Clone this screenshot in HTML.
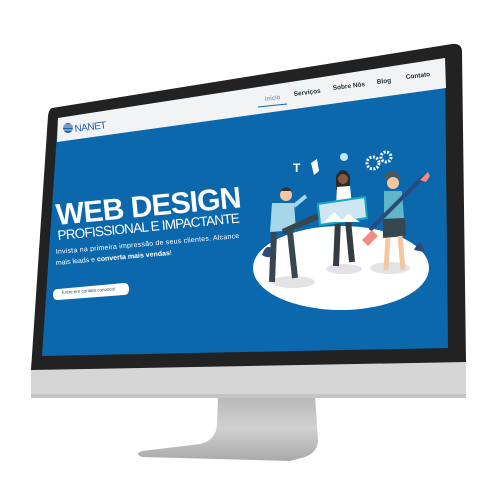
<!DOCTYPE html>
<html><head><meta charset="utf-8"><style>
html,body{margin:0;padding:0;background:#fff;width:500px;height:500px;overflow:hidden}
svg{display:block}
text{font-family:"Liberation Sans",sans-serif}
</style></head><body>
<svg width="500" height="500" viewBox="0 0 500 500">
<defs>
<linearGradient id="st" x1="0" y1="0" x2="0" y2="1"><stop offset="0" stop-color="#b8b8b8"/><stop offset="0.5" stop-color="#d0d0d0"/><stop offset="1" stop-color="#a9a9a9"/></linearGradient>
</defs>
<!-- stand -->
<path d="M218,396 L315,396 L318,440 Q318,452 305,457 L290,461 L142,457 Q134,454 142,451 L200,444 Q216,440 217,425 Z" fill="url(#st)"/>
<!-- chin -->
<path d="M31,362 L466,352 L466,392 Q466,398 460,398 L37,398 Q31,398 31,392 Z" fill="#d6d6d6"/>
<path d="M31,394 L466,394 L466,398 L31,398 Z" fill="#c4c4c4"/>
<!-- bezel -->
<path d="M52,108 L452,44 Q462,43 462,52 L466,362 L31,370 L48,116 Q49,109 52,108 Z" fill="#222"/>
<!-- screen blue -->
<path d="M58,118 L445,58 L448,348 L42,356 Z" fill="#0b68ad"/>
<!-- nav -->
<path d="M58,118 L445,58 L446,88 L57,142 Z" fill="#f2f3f5"/>
<line x1="258" y1="107" x2="287" y2="104" stroke="#0b68ad" stroke-width="1"/>
<g font-size="6.5" font-weight="bold" fill="#233">
<text x="265" y="101" transform="rotate(-7 265 101)" fill="#5a8fc0" font-weight="normal">Início</text>
<text x="294" y="96" transform="rotate(-7 294 96)">Serviços</text>
<text x="333" y="90" transform="rotate(-7 333 90)">Sobre Nós</text>
<text x="377" y="84" transform="rotate(-7 377 84)">Blog</text>
<text x="406" y="79" transform="rotate(-7 406 79)">Contato</text>
</g>
<!-- logo -->
<circle cx="68" cy="128" r="5" fill="#1f5ea8"/>
<path d="M63,127 h10 M63.5,130 h9 M64,125 h8" stroke="#fff" stroke-width="0.8"/>
<text x="75" y="132" font-size="10" fill="#1f5ea8" transform="rotate(-7 75 132)" letter-spacing="-0.5">NANET</text>
<!-- hero text -->
<text x="57" y="225" font-size="30" font-weight="bold" fill="#fff" transform="rotate(-5.5 57 225)" textLength="186">WEB DESIGN</text>
<text x="58" y="240" font-size="13.5" fill="#fff" transform="rotate(-5.5 58 240)" textLength="183">PROFISSIONAL E IMPACTANTE</text>
<text x="56" y="254" font-size="7" fill="#fff" transform="rotate(-5 56 254)" textLength="184">Invista na primeira impressão de seus clientes. Alcance</text>
<text x="56" y="265" font-size="7" fill="#fff" transform="rotate(-5 56 265)">mais leads e <tspan font-weight="bold">converta mais vendas</tspan>!</text>
<path d="M58,289 L124,283 Q129,283 129,289 Q129,295 124,295 L58,300 Q53,300 53,295 Q53,289 58,289 Z" fill="#fff"/>
<text x="62" y="294" font-size="4.5" fill="#345" transform="rotate(-4 62 294)">Entre em contato conosco!</text>
<!-- illustration -->
<ellipse cx="341" cy="268" rx="88" ry="42" fill="#fff"/>
<ellipse cx="293" cy="282" rx="22" ry="6" fill="#e3e3e6"/>
<ellipse cx="344" cy="269" rx="18" ry="5" fill="#e3e3e6"/>
<ellipse cx="390" cy="268" rx="20" ry="6" fill="#e3e3e6"/>
<path d="M262,255 q5,-14 12,-4 q-2,10 -12,4z" fill="#2e4a7a"/>
<path d="M414,250 q8,-16 10,2z" fill="#2e4a7a"/>
<!-- person 1 -->
<circle cx="286" cy="195" r="6" fill="#f4c7a1"/>
<path d="M280,191 q6,-8 12,0z" fill="#333"/>
<path d="M272,203 L294,203 L296,230 L270,232 Z" fill="#a7d6ea"/>
<path d="M294,206 L306,196" stroke="#a7d6ea" stroke-width="4"/>
<path d="M274,232 L272,282 M290,232 L295,278" stroke="#37474f" stroke-width="6"/>
<path d="M283,232 L318,216" stroke="#37474f" stroke-width="6"/>
<!-- person 2 -->
<circle cx="343" cy="178" r="6" fill="#8a5a3c"/>
<path d="M336,176 q7,-12 14,0 l0,14 l-14,0z" fill="#2b2b2b"/>
<circle cx="343" cy="179" r="5" fill="#8a5a3c"/>
<path d="M337,187 L350,186 L352,205 L336,206 Z" fill="#fff"/>
<path d="M338,220 L336,266 M348,220 L352,262" stroke="#333c44" stroke-width="6"/>
<path d="M318,204 L365,197 L367,218 L320,225 Z" fill="#cfe7f3" stroke="#1aa3c8" stroke-width="2"/>
<path d="M324,222 l10,-10 l8,8 l6,-6 l12,8z" fill="#fff"/>
<!-- person 3 -->
<circle cx="393" cy="183" r="6" fill="#f4c7a1"/>
<path d="M386,182 q7,-10 14,-2 l-2,-6 q-6,-6 -12,0z" fill="#555"/>
<path d="M384,191 L402,191 L404,218 L384,219 Z" fill="#5fb6c8"/>
<path d="M383,219 L405,218 L406,236 L383,238 Z" fill="#37474f"/>
<path d="M388,238 L386,270 M400,236 L403,270" stroke="#f4c7a1" stroke-width="5"/>
<path d="M370,230 L424,176" stroke="#2e4a7a" stroke-width="4"/>
<path d="M362,240 l10,-10 l6,6 l-10,10z" fill="#f28b82"/>
<path d="M420,180 l8,-8 l2,4 l-4,6z" fill="#f28b82"/>
<!-- icons -->
<text x="293" y="172" font-size="12" font-weight="bold" fill="#fff" font-family="Liberation Serif,serif">T</text>
<path d="M311,163 l6,-4 l2,12 l-5,4z" fill="#fff"/>
<circle cx="344" cy="157" r="4" fill="#bfe6f5"/>
<circle cx="373" cy="163" r="6" fill="none" stroke="#fff" stroke-width="3" stroke-dasharray="2 1.5"/>
<circle cx="386" cy="157" r="5" fill="none" stroke="#fff" stroke-width="3" stroke-dasharray="2 1.5"/>
</svg>
</body></html>
